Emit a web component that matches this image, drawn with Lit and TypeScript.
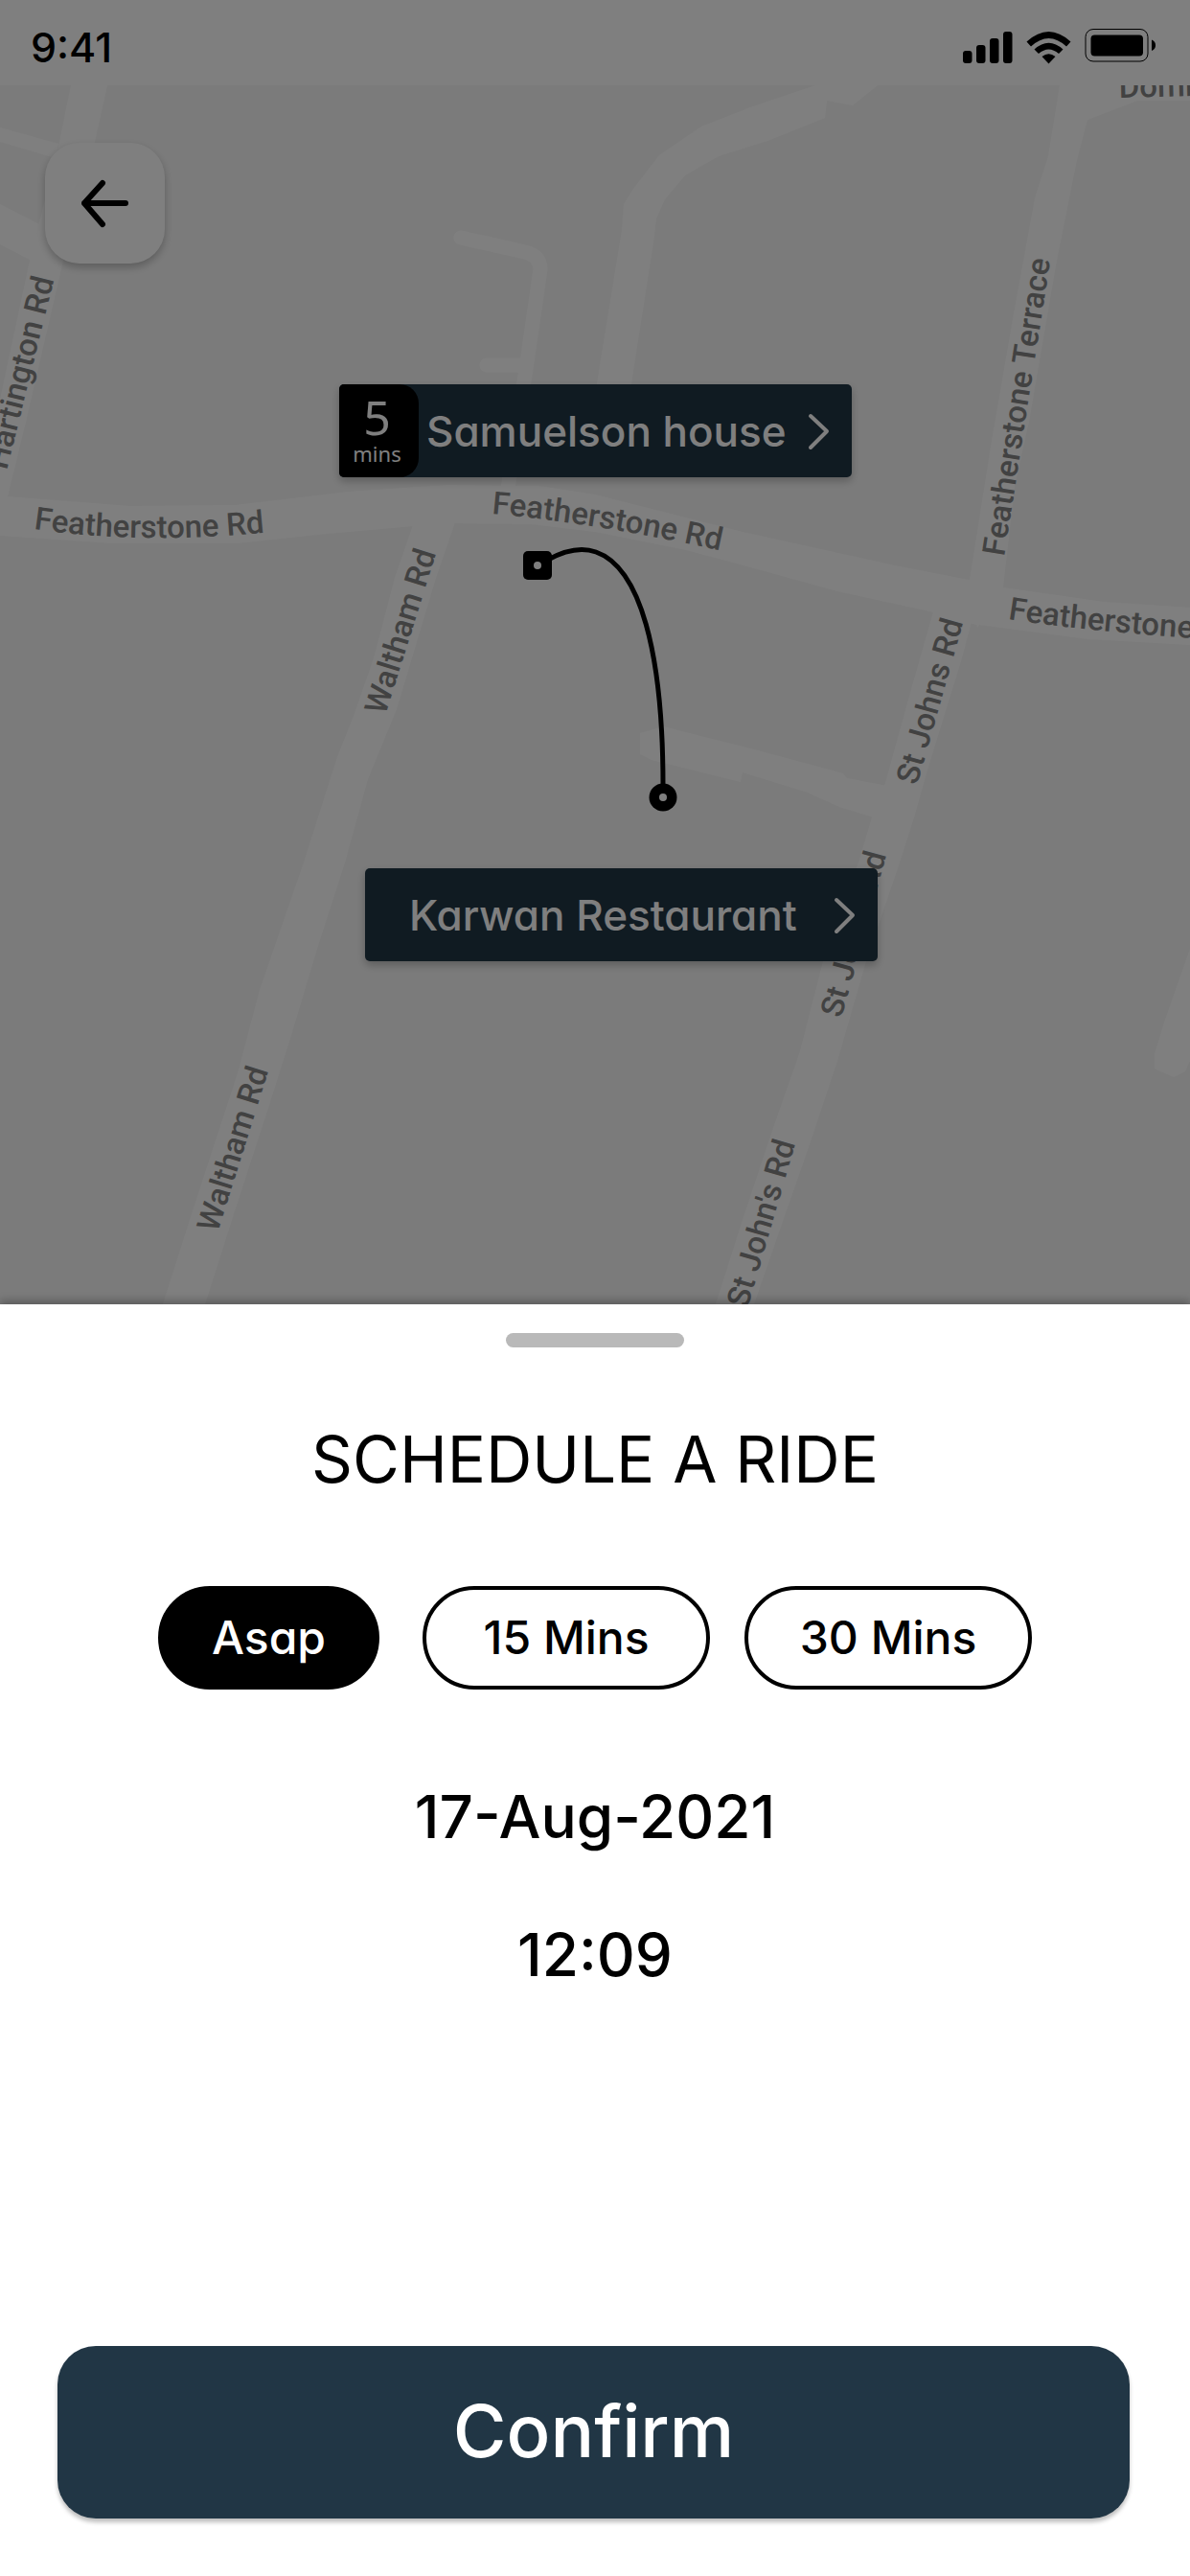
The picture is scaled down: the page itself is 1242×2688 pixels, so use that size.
import { LitElement, html, css, svg } from "lit";
import { customElement, state } from "lit/decorators.js";

/** Road surfaces, in map coordinates. */
const ROADS = [
  "M74 89 112 89 99 148 66 272 27 440 8 518 0 545 0 417 31 272 62 148Z",
  "M0 133 61 150 58 165 0 148Z",
  "M0 213 41 234 33 272 0 255Z",
  "M851 89 783 112 732 132 688 162 661 197 651 213 649 240 623 400 615 450 652 450 659 400 682 253 685 228 694 208 715 183 750 163 801 147 861 123 863 105 890 110 916 89Z",
  "M1106 89 1094 163 1080 207 1057 333 1035 460 1012 605 1020 655 1047 613 1059 507 1074 440 1102 277 1124 167 1135 125 1187 105 1242 105 1242 89Z",
  "M0 500 8 518 135 528 246 527 364 513 467 506 562 507 621 516 775 555 934 590 1011 605 1047 613 1152 628 1242 634 1242 673 1136 667 1015 651 975 639 874 617 787 593 716 574 621 555 554 547 475 546 432 549 341 557 246 567 119 567 0 559Z",
  "M432 545 412 603 390 687 368 750 352 790 317 900 271 1033 248 1120 226 1187 198 1273 170 1361 214 1361 242 1273 281 1153 305 1077 331 990 360 900 384 813 414 740 455 603 475 545Z",
  "M975 635 950 723 924 817 910 853 896 900 859 1003 835 1097 807 1177 775 1273 747 1361 787 1361 815 1280 843 1200 874 1107 904 1003 939 900 954 853 969 800 1003 690 1015 645Z",
  "M668 765 692 758 791 783 880 807 884 812 926 820 912 853 876 842 843 827 775 806 773 816 680 793 668 787Z",
  "M1242 990 1215 1067 1205 1100 1205 1115 1225 1124 1237 1118 1242 1107Z",
];

/** Street names with the baseline each one follows. */
const STREETS = [
  { id: "s1", d: "M7 491 L71 233", name: "Hartington Rd" },
  { id: "s2", d: "M35 552 Q160 570 300 553", name: "Featherstone Rd" },
  { id: "s3", d: "M513 536 Q635 547 790 583", name: "Featherstone Rd" },
  { id: "s4", d: "M1052 646 Q1150 662 1400 676", name: "Featherstone Rd" },
  { id: "s5", d: "M1048 581 L1108 196", name: "Featherstone Terrace" },
  { id: "s6", d: "M402 747 L471 527", name: "Waltham Rd" },
  { id: "s7", d: "M227 1287 L296 1067", name: "Waltham Rd" },
  { id: "s8", d: "M957 820 L1021 594", name: "St Johns Rd" },
  { id: "s9", d: "M878 1063 L946 817", name: "St Johns Rd" },
  { id: "s10", d: "M780 1366 L852 1118", name: "St John's Rd" },
  { id: "s11", d: "M1168 102 L1400 96", name: "Dominion Rd" },
];

const chevron = html`<svg class="chevron" viewBox="0 0 24 40" aria-hidden="true">
  <path d="M3 4 20 20 3 37" />
</svg>`;

@customElement("status-bar")
class StatusBar extends LitElement {
  static styles = css`
    :host {
      display: flex;
      align-items: center;
      justify-content: space-between;
      height: 89px;
      padding: 8px 32px 0;
      box-sizing: border-box;
      background: #fff;
      font: 500 43px/48px Inter, sans-serif;
    }
    .icons {
      width: 208px;
      height: 48px;
    }
  `;

  render() {
    return html`
      <span>9:41</span>
      <svg class="icons" viewBox="1002 24 208 48" aria-label="Signal, Wi-Fi and battery full" role="img">
        <rect x="1005" y="52" width="9.5" height="13" rx="3" />
        <rect x="1019" y="46" width="9.5" height="19" rx="3" />
        <rect x="1033" y="39" width="9.5" height="26" rx="3" />
        <rect x="1047" y="32" width="9.5" height="33" rx="3" />
        <path d="M1071.5 42.5Q1094.5 21.5 1117.5 42.5L1113 47.5Q1094.5 30.5 1076 47.5Z" />
        <path d="M1079.5 50.5Q1094.5 37 1109.5 50.5L1105 55Q1094.5 46 1084 55Z" />
        <path d="M1087.5 58Q1094.5 52.5 1101.5 58L1094.5 65.5Z" />
        <rect x="1133" y="29.5" width="65" height="33.5" rx="8" fill="none" stroke="#000" stroke-width="1" />
        <rect x="1138.5" y="35.5" width="54.5" height="22" rx="4" />
        <path d="M1202 40.5Q1206 42 1206 46.2T1202 52Z" />
      </svg>
    `;
  }
}

@customElement("ride-map")
class RideMap extends LitElement {
  static styles = css`
    :host {
      display: block;
      position: relative;
      overflow: hidden;
      background: #f7f7f7;
    }
    .canvas {
      display: block;
      width: 100%;
      height: 100%;
    }
    .road {
      fill: #fff;
    }
    .lane {
      fill: none;
      stroke: #fff;
      stroke-width: 15;
      stroke-linecap: round;
      stroke-linejoin: round;
    }
    .street {
      font: 500 33px Roboto, sans-serif;
      fill: #858585;
    }
    .route {
      fill: none;
      stroke: #000;
      stroke-width: 5;
    }
    .dot {
      fill: #fff;
    }
    button {
      position: absolute;
      border: 0;
      padding: 0;
      font-family: Inter, sans-serif;
      font-feature-settings: "cv11";
      box-shadow: 0 4px 8px rgba(0, 0, 0, 0.25);
      cursor: pointer;
    }
    .back {
      left: 47px;
      top: 60px;
      display: grid;
      place-items: center;
      width: 125px;
      height: 126px;
      border-radius: 36px;
      background: #fff;
    }
    .back svg {
      width: 54px;
      height: 54px;
      fill: none;
      stroke: #000;
      stroke-width: 6;
      stroke-linecap: round;
      stroke-linejoin: round;
    }
    .place {
      display: flex;
      align-items: center;
      gap: 8px;
      width: 535px;
      height: 97px;
      padding-right: 22px;
      border-radius: 5px;
      background: #213645;
      color: #fff;
      font-size: 44px;
      line-height: 56px;
      font-weight: 500;
      white-space: nowrap;
      box-sizing: border-box;
    }
    .pickup {
      left: 354px;
      top: 312px;
    }
    .dropoff {
      left: 381px;
      top: 817px;
      padding-left: 46px;
    }
    .eta {
      display: flex;
      flex-direction: column;
      justify-content: center;
      align-items: center;
      width: 83px;
      height: 97px;
      padding: 0 4px 6px 0;
      box-sizing: border-box;
      border-radius: 5px 20px 20px 5px;
      background: #000;
      font: 400 22px/24px "Noto Sans", sans-serif;
    }
    .eta strong {
      font-weight: 400;
      font-size: 50px;
      line-height: 52px;
    }
    .chevron {
      width: 24px;
      height: 40px;
      margin-left: auto;
      fill: none;
      stroke: #fff;
      stroke-width: 4;
      stroke-linecap: round;
      stroke-linejoin: round;
    }
  `;

  render() {
    return html`
      <svg class="canvas" viewBox="0 89 1242 1272" preserveAspectRatio="xMinYMin slice">
        ${ROADS.map((d) => svg`<path class="road" d=${d} />`)}
        <path class="lane" d="M481 248 548 263Q564 267 564 281L550 378 530 510M508 381H548" />
        ${STREETS.map(
          (s) => svg`<path id=${s.id} d=${s.d} fill="none" />
            <text class="street"><textPath href=${"#" + s.id}>${s.name}</textPath></text>`
        )}
        <path class="route" d="M572 584C592 573 608 571 622 576C668 592 692 680 692 820" />
        <rect x="546" y="575" width="30" height="30" rx="5" />
        <circle class="dot" cx="561" cy="590" r="4" />
        <circle cx="692" cy="832" r="14.5" />
        <circle class="dot" cx="692" cy="832" r="4" />
      </svg>
      <button class="back" aria-label="Back">
        <svg viewBox="0 0 54 54" aria-hidden="true"><path d="M24 6 5 27 24 49M5 27H48" /></svg>
      </button>
      <button class="place pickup">
        <span class="eta"><strong>5</strong>mins</span>
        <span>Samuelson house</span>
        ${chevron}
      </button>
      <button class="place dropoff">
        <span>Karwan Restaurant</span>
        ${chevron}
      </button>
    `;
  }
}

@customElement("schedule-sheet")
class ScheduleSheet extends LitElement {
  static styles = css`
    :host {
      display: flex;
      flex-direction: column;
      align-items: center;
      padding: 30px 60px 60px;
      background: #fff;
      box-shadow: 0 -4px 8px rgba(0, 0, 0, 0.25);
      font-family: Inter, sans-serif;
      font-feature-settings: "cv11";
      color: #000;
    }
    .handle {
      width: 186px;
      height: 15px;
      border-radius: 8px;
      background: #b9b9b9;
    }
    h1 {
      margin: 77px 0 92px;
      font-size: 67px;
      line-height: 80px;
      font-weight: 400;
    }
    .options {
      display: flex;
      gap: 36px;
    }
    .option {
      box-sizing: border-box;
      width: 300px;
      height: 108px;
      padding: 0;
      border: 4px solid #000;
      border-radius: 54px;
      background: #fff;
      color: #000;
      font: 500 48px/60px Inter, sans-serif;
      font-feature-settings: inherit;
      cursor: pointer;
    }
    .option.now {
      width: 231px;
      margin-right: 9px;
    }
    .option.selected {
      background: #000;
      color: #fff;
    }
    .when {
      display: flex;
      flex-direction: column;
      align-items: center;
      gap: 72px;
      margin: 97px 0 96px;
      font-size: 62px;
      line-height: 72px;
      font-weight: 500;
    }
    .confirm {
      align-self: stretch;
      height: 180px;
      margin: 276px 3px 0 0;
      padding: 0 0 4px;
      border: 0;
      border-radius: 40px;
      background: #213645;
      color: #fff;
      font: 500 76px/88px Inter, sans-serif;
      font-feature-settings: inherit;
      box-shadow: 0 4px 4px rgba(0, 0, 0, 0.25);
      cursor: pointer;
    }
  `;

  @state() private selected = "Asap";

  render() {
    return html`
      <div class="handle"></div>
      <h1>SCHEDULE A RIDE</h1>
      <div class="options" role="group" aria-label="Pickup time">
        ${["Asap", "15 Mins", "30 Mins"].map(
          (o, i) => html`<button
            class="option ${i === 0 ? "now" : ""} ${o === this.selected ? "selected" : ""}"
            aria-pressed=${o === this.selected}
            @click=${() => (this.selected = o)}
          >${o}</button>`
        )}
      </div>
      <div class="when">
        <time datetime="2021-08-17">17-Aug-2021</time>
        <time datetime="12:09">12:09</time>
      </div>
      <button class="confirm">Confirm</button>
    `;
  }
}

@customElement("app-root")
class AppRoot extends LitElement {
  static styles = css`
    :host {
      display: flex;
      flex-direction: column;
      min-height: 100vh;
    }
    .behind {
      position: relative;
      flex: 1;
      display: flex;
      flex-direction: column;
    }
    .scrim {
      position: absolute;
      inset: 0;
      background: rgba(0, 0, 0, 0.5);
      pointer-events: none;
    }
    ride-map {
      flex: 1 1 1100px;
    }
    schedule-sheet {
      position: relative;
    }
  `;

  render() {
    return html`
      <div class="behind">
        <status-bar></status-bar>
        <ride-map></ride-map>
        <div class="scrim"></div>
      </div>
      <schedule-sheet></schedule-sheet>
    `;
  }
}
